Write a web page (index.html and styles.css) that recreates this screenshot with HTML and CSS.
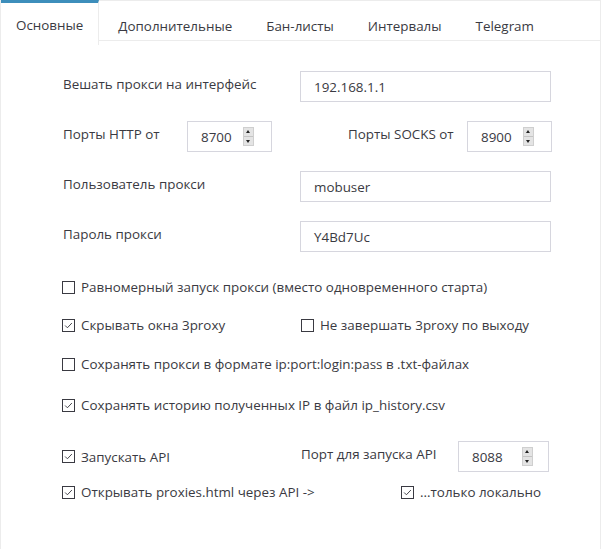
FILE: index.html
```html
<!DOCTYPE html>
<html lang="ru">
<head>
<meta charset="utf-8">
<link rel="stylesheet" href="styles.css">
</head>
<body>
<div class="window">
  <div class="tabs">
    <div class="tab active">Основные</div>
    <div class="tab">Дополнительные</div>
    <div class="tab">Бан-листы</div>
    <div class="tab">Интервалы</div>
    <div class="tab">Telegram</div>
  </div>
  <div class="content">
    <div class="row r1">
      <div class="label lw">Вешать прокси на интерфейс</div>
      <div class="field wide">192.168.1.1</div>
    </div>
    <div class="row r2">
      <div class="label lh">Порты HTTP от</div>
      <div class="field num"><span>8700</span><span class="spin"><i class="up"></i><i class="down"></i></span></div>
      <div class="label ls">Порты SOCKS от</div>
      <div class="field num"><span>8900</span><span class="spin"><i class="up"></i><i class="down"></i></span></div>
    </div>
    <div class="row r3">
      <div class="label lw">Пользователь прокси</div>
      <div class="field wide">mobuser</div>
    </div>
    <div class="row r4">
      <div class="label lw">Пароль прокси</div>
      <div class="field wide">Y4Bd7Uc</div>
    </div>

    <div class="crow c1">
      <label class="check"><span class="box"></span>Равномерный запуск прокси (вместо одновременного старта)</label>
    </div>
    <div class="crow c2">
      <label class="check col1"><span class="box on"><svg viewBox="0 0 13 13"><path d="M2.5 6.5 L5.2 9.2 L10.5 3.6"/></svg></span>Скрывать окна 3proxy</label>
      <label class="check"><span class="box"></span>Не завершать 3proxy по выходу</label>
    </div>
    <div class="crow c3">
      <label class="check"><span class="box"></span>Сохранять прокси в формате ip:port:login:pass в .txt-файлах</label>
    </div>
    <div class="crow c4">
      <label class="check"><span class="box on"><svg viewBox="0 0 13 13"><path d="M2.5 6.5 L5.2 9.2 L10.5 3.6"/></svg></span>Сохранять историю полученных IP в файл ip_history.csv</label>
    </div>

    <div class="row r5">
      <label class="check col1"><span class="box on"><svg viewBox="0 0 13 13"><path d="M2.5 6.5 L5.2 9.2 L10.5 3.6"/></svg></span>Запускать API</label>
      <div class="label la">Порт для запуска API</div>
      <div class="field num api"><span>8088</span><span class="spin"><i class="up"></i><i class="down"></i></span></div>
    </div>
    <div class="crow c6">
      <label class="check colw"><span class="box on"><svg viewBox="0 0 13 13"><path d="M2.5 6.5 L5.2 9.2 L10.5 3.6"/></svg></span>Открывать proxies.html через API -&gt;</label>
      <label class="check"><span class="box on"><svg viewBox="0 0 13 13"><path d="M2.5 6.5 L5.2 9.2 L10.5 3.6"/></svg></span>...только локально</label>
    </div>
  </div>
</div>
</body>
</html>
```

FILE: styles.css
```css
html, body {
  margin: 0;
  padding: 0;
  background: #ffffff;
}
body {
  font-family: "Open Sans", "Noto Sans", sans-serif;
  font-size: 13.4px;
  color: #3a3a42;
}
.window {
  width: 601px;
  height: 549px;
  border-left: 1px solid #ececec;
  border-right: 1px solid #ececec;
  border-top: 1px solid #ececec;
  box-sizing: border-box;
  position: relative;
}
.tabs {
  display: flex;
  height: 40px;
  border-bottom: 1px solid #ececec;
  box-sizing: border-box;
}
.tab {
  padding: 0 17px;
  line-height: 50px;
  height: 40px;
  white-space: nowrap;
}
.tab:nth-child(2) { padding-left: 19px; }
.tab.active {
  padding: 0 15px 0 15px;
  border-top: 3px solid #3d8ebb;
  border-right: 1px solid #ececec;
  line-height: 44px;
  height: 45px;
  box-sizing: border-box;
  background: #fff;
  margin-top: -1px;
  position: relative;
}
.content {
  padding-left: 61px;
}
.row {
  display: flex;
  align-items: center;
  height: 31px;
  margin-top: 19px;
}
.r1 { margin-top: 30px; }
.label {
  padding-bottom: 5px;
  padding-left: 1px;
  box-sizing: border-box;
  white-space: nowrap;
}
.lw { width: 238px; }
.lh { width: 125px; }
.ls { width: 120px; margin-left: 75px; }
.la { width: 158px; margin-left: 0; }
.field {
  height: 31px;
  border: 1px solid #d6d6de;
  box-sizing: border-box;
  display: flex;
  align-items: center;
  padding-left: 13px;
  white-space: nowrap;
}
.wide { width: 251px; }
.num {
  width: 85px;
  justify-content: space-between;
  padding-right: 17px;
  padding-left: 13px;
}
.num.api { width: 91px; padding-right: 15px; }
.spin {
  width: 11px;
  height: 19px;
  background: #e4e4e4;
  border: 1px solid #cfcfcf;
  box-sizing: border-box;
  display: flex;
  flex-direction: column;
}
.spin i {
  flex: 1;
  position: relative;
}
.spin i.up { border-bottom: 1px solid #c4c4c4; }
.spin i::after {
  content: "";
  position: absolute;
  left: 2px;
  top: 2px;
  border-left: 2.5px solid transparent;
  border-right: 2.5px solid transparent;
}
.spin i.up::after { border-bottom: 3px solid #222; }
.spin i.down::after { border-top: 3px solid #222; top: 3px; }

.crow {
  display: flex;
  align-items: center;
  height: 20px;
}
.c1 { margin-top: 25px; }
.c2 { margin-top: 18px; }
.c3 { margin-top: 19px; }
.c4 { margin-top: 21px; }
.r5 { margin-top: 26px; }
.c6 { margin-top: 10px; }
.check {
  display: flex;
  align-items: center;
  white-space: nowrap;
}
.col1 { width: 239px; }
.colw { width: 339px; }
.r5 .col1 { width: 238px; }
.box {
  width: 13px;
  height: 13px;
  border: 1px solid #3a3a42;
  box-sizing: border-box;
  margin-right: 6px;
  flex: none;
  display: flex;
}
.box svg {
  width: 11px;
  height: 11px;
}
.box path {
  fill: none;
  stroke: #3a3a42;
  stroke-width: 1.1;
}
```
